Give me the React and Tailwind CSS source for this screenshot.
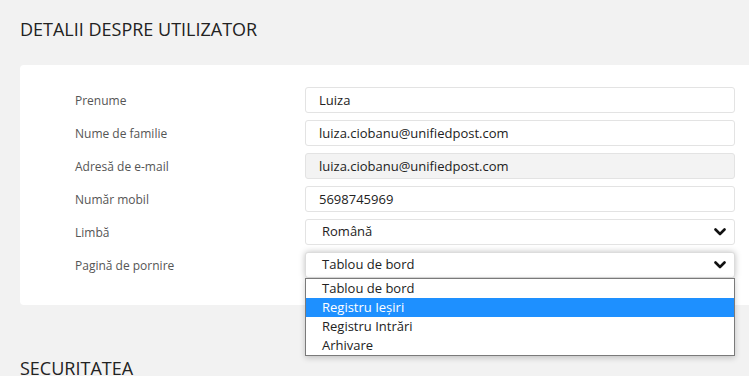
const ROWS = [
  { label: 'Prenume', value: 'Luiza' },
  { label: 'Nume de familie', value: 'luiza.ciobanu@unifiedpost.com' },
  { label: 'Adresă de e-mail', value: 'luiza.ciobanu@unifiedpost.com', disabled: true },
  { label: 'Număr mobil', value: '5698745969' },
]

const START_PAGES = ['Tablou de bord', 'Registru Ieșiri', 'Registru Intrări', 'Arhivare']

function Chevron() {
  return (
    <svg width="12" height="8" viewBox="0 0 12 8" className="shrink-0">
      <path d="M1.5 1.5 L6 6 L10.5 1.5" fill="none" stroke="#111" strokeWidth="2.6" strokeLinecap="round" strokeLinejoin="round" />
    </svg>
  )
}

function Row({ label, children }) {
  return (
    <div className="flex items-center h-[26px]">
      <div className="w-[230px] shrink-0 text-[12px] text-[#555] pt-[2px]">{label}</div>
      {children}
    </div>
  )
}

export default function App() {
  return (
    <div className="min-h-screen bg-[#f2f2f2] overflow-hidden pl-5 pt-[17px]" style={{ fontFamily: '"Open Sans", sans-serif' }}>
      <h1 className="text-[18px] leading-[24px] text-[#222] mb-[24px]">DETALII DESPRE UTILIZATOR</h1>

      {/* details card */}
      <div className="bg-white rounded-l-[4px] pl-[55px] pt-[22px] pb-[27px] flex flex-col gap-[7px]">
        {ROWS.map((r) => (
          <Row key={r.label} label={r.label}>
            <div
              className={`w-[430px] h-[26px] flex items-center pl-[13px] pt-[1px] border border-[#e3e3e3] rounded-[3px] text-[13px] text-[#222] ${r.disabled ? 'bg-[#f3f3f3]' : 'bg-white'}`}
            >
              {r.value}
            </div>
          </Row>
        ))}

        <Row label="Limbă">
          <div className="w-[430px] h-[26px] flex items-center justify-between pl-[16px] pr-[8px] border border-[#e3e3e3] rounded-[3px] text-[13px] text-[#222] bg-white">
            <span>Română</span>
            <Chevron />
          </div>
        </Row>

        <Row label="Pagină de pornire">
          <div className="relative">
            <div className="w-[430px] h-[26px] flex items-center justify-between pl-[16px] pr-[8px] border border-[#dcdcdc] rounded-[3px] text-[13px] text-[#222] bg-white shadow-[0_0_6px_rgba(0,0,0,0.25)]">
              <span>Tablou de bord</span>
              <Chevron />
            </div>
            <ul className="absolute left-0 top-[26px] w-[430px] bg-white border border-[#7a7a7a] z-10 shadow-[0_2px_6px_rgba(0,0,0,0.2)]">
              {START_PAGES.map((p, i) => (
                <li
                  key={p}
                  className={`h-[19px] leading-[19px] pl-[16px] text-[13px] ${i === 1 ? 'bg-[#1e90ff] text-white' : 'text-[#222]'}`}
                >
                  {p}
                </li>
              ))}
            </ul>
          </div>
        </Row>
      </div>

      <h2 className="mt-[51px] text-[18px] leading-[24px] text-[#222]">SECURITATEA</h2>
    </div>
  )
}
